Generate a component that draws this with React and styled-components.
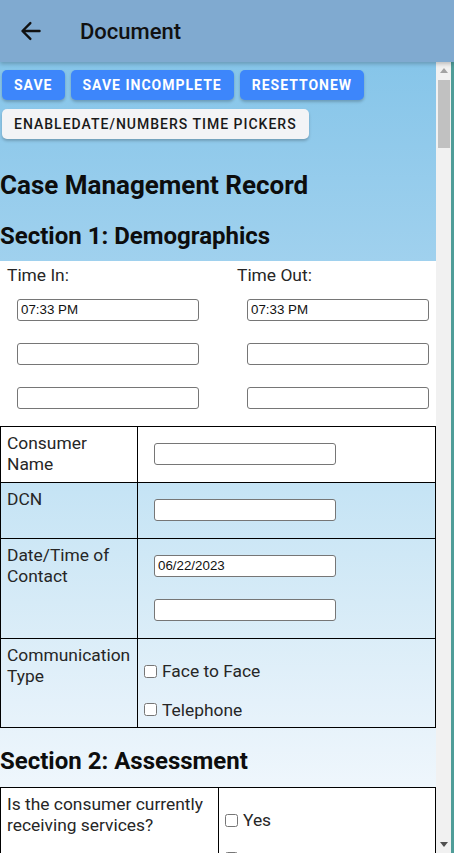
import React from "react";
import styled, { createGlobalStyle } from "styled-components";

const GlobalStyle = createGlobalStyle`
  html, body {
    margin: 0;
    padding: 0;
    height: 100%;
    overflow: hidden;
  }
  body {
    font-family: Roboto, "Noto Sans", Arial, sans-serif;
    color: #1c1c1c;
  }
  #root {
    height: 100%;
  }
`;

const Frame = styled.div`
  height: 100vh;
  display: flex;
  flex-direction: column;
`;

const AppBar = styled.header`
  flex: 0 0 62px;
  display: flex;
  align-items: center;
  background: #80aad0;
  box-shadow: 0 2px 4px rgba(0, 0, 0, 0.22);
  position: relative;
  z-index: 2;
`;

const BackButton = styled.button`
  width: 28px;
  height: 28px;
  margin-left: 17px;
  margin-right: 35px;
  padding: 0;
  border: none;
  background: transparent;
  display: flex;
  align-items: center;
  justify-content: center;
  cursor: pointer;
`;

const Title = styled.h1`
  margin: 0;
  font-size: 22px;
  font-weight: 500;
  color: #111;
`;

const Body = styled.div`
  flex: 1;
  min-height: 0;
  display: flex;
  border-right: 3px solid #4f9d99;
`;

const Scroller = styled.main`
  flex: 1;
  overflow-y: auto;
  scrollbar-width: none;
  &::-webkit-scrollbar {
    display: none;
  }
`;

/* scrollbar drawn beside the scrolling pane */
const ScrollRail = styled.div`
  flex: 0 0 15px;
  display: flex;
  flex-direction: column;
  background: #f1f1f1;
`;

const RailCap = styled.div`
  flex: 0 0 17px;
  display: flex;
  align-items: center;
  justify-content: center;
`;

const RailTrack = styled.div`
  flex: 1;
  padding: 1px 1px 0 2px;
`;

const RailThumb = styled.div`
  height: 68px;
  background: #c1c1c1;
`;

const Content = styled.div`
  padding-bottom: 400px;
  background: linear-gradient(
    to bottom,
    #86c5e9 0px,
    #a0d1ee 200px,
    #c6e4f5 430px,
    #d6ebf7 540px,
    #e4f1fa 640px,
    #eef6fc 720px,
    #ffffff 1100px
  );
`;

const Toolbar = styled.div`
  display: flex;
  flex-wrap: wrap;
  column-gap: 6px;
  row-gap: 9px;
  padding: 8px 0 0 2px;
`;

const ActionButton = styled.button`
  height: 30px;
  padding: 0 12px;
  border: none;
  border-radius: 5px;
  font-family: Roboto, Arial, sans-serif;
  font-size: 14px;
  font-weight: ${(p) => (p.$primary ? 700 : 500)};
  letter-spacing: 1px;
  text-transform: uppercase;
  color: ${(p) => (p.$primary ? "#ffffff" : "#1a1a1a")};
  background: ${(p) => (p.$primary ? "#3d86fb" : "#f3f4f6")};
  box-shadow: 0 2px 3px rgba(0, 0, 0, 0.22);
  cursor: pointer;
`;

const Heading = styled.h2`
  margin: ${(p) => p.$margin};
  font-size: ${(p) => p.$size}px;
  line-height: 1.2;
  font-weight: 700;
  color: #0d0d0d;
`;

const Banner = styled.div`
  padding-bottom: 10px;
`;

const TimeGrid = styled.div`
  display: grid;
  grid-template-columns: 230px 1fr;
  background: #ffffff;
  padding: 4px 0 6px;
`;

const Stack = styled.div`
  display: flex;
  flex-direction: column;
  padding-left: ${(p) => p.$indent || 0}px;
`;

const FieldLabel = styled.div`
  font-size: 17.4px;
  line-height: 21px;
  color: #262626;
  margin-bottom: 2px;
`;

const TextInput = styled.input`
  display: block;
  box-sizing: border-box;
  width: 182px;
  height: 22px;
  margin: 11px 10px;
  padding: 1px 3px;
  border: 1px solid #767676;
  border-radius: 3px;
  background: #fff;
  font-family: Arial, "Liberation Sans", sans-serif;
  font-size: 13.33px;
  color: #111;
`;

const Table = styled.table`
  width: 436px;
  table-layout: fixed;
  border-collapse: collapse;
  border: 1px solid #000;
`;

const Row = styled.tr`
  background: ${(p) => (p.$white ? "#ffffff" : "transparent")};
`;

const LabelCell = styled.td`
  width: ${(p) => p.$width}px;
  border: 1px solid #000;
  padding: 6px;
  vertical-align: top;
  font-size: 17.4px;
  line-height: 21px;
  color: #262626;
`;

const ValueCell = styled.td`
  border: 1px solid #000;
  padding: 5px 6px 6px;
  vertical-align: middle;
`;

const Option = styled.label`
  display: flex;
  align-items: center;
  height: 22px;
  margin-top: 16.5px;
  font-size: 17.4px;
  color: #262626;
`;

const Check = styled.input`
  width: 13px;
  height: 13px;
  margin: 0 5px 0 0;
`;

const ArrowBack = () => (
  <svg width="28" height="28" viewBox="0 0 512 512" aria-hidden="true">
    <path
      d="M244 400L100 256l144-144M120 256h292"
      fill="none"
      stroke="#111"
      strokeWidth="44"
      strokeLinecap="round"
      strokeLinejoin="round"
    />
  </svg>
);

const Triangle = ({ down, color }) => (
  <svg width="8" height="5" viewBox="0 0 8 5" aria-hidden="true">
    <path d={down ? "M0 0h8L4 5z" : "M0 5h8L4 0z"} fill={color} />
  </svg>
);

const CheckOption = ({ label }) => (
  <Option>
    <Check type="checkbox" />
    {label}
  </Option>
);

export default function App() {
  return (
    <>
      <GlobalStyle />
      <Frame>
        <AppBar>
          <BackButton aria-label="Back">
            <ArrowBack />
          </BackButton>
          <Title>Document</Title>
        </AppBar>
        <Body>
          <Scroller>
            <Content>
              <Banner>
                <Toolbar>
                  <ActionButton $primary>Save</ActionButton>
                  <ActionButton $primary>Save Incomplete</ActionButton>
                  <ActionButton $primary>ResetToNew</ActionButton>
                  <ActionButton>EnableDate/Numbers Time Pickers</ActionButton>
                </Toolbar>
                <Heading $size={26} $margin="31px 0 21px">
                  Case Management Record
                </Heading>
                <Heading $size={24} $margin="0">
                  Section 1: Demographics
                </Heading>
              </Banner>

              <TimeGrid>
                <Stack $indent={7}>
                  <FieldLabel>Time In:</FieldLabel>
                  <TextInput defaultValue="07:33 PM" />
                  <TextInput />
                  <TextInput />
                </Stack>
                <Stack $indent={7}>
                  <FieldLabel>Time Out:</FieldLabel>
                  <TextInput defaultValue="07:33 PM" />
                  <TextInput />
                  <TextInput />
                </Stack>
              </TimeGrid>

              <Table>
                <tbody>
                  <Row $white>
                    <LabelCell $width={124}>Consumer Name</LabelCell>
                    <ValueCell>
                      <Stack>
                        <TextInput />
                      </Stack>
                    </ValueCell>
                  </Row>
                  <Row>
                    <LabelCell $width={124}>DCN</LabelCell>
                    <ValueCell>
                      <Stack>
                        <TextInput />
                      </Stack>
                    </ValueCell>
                  </Row>
                  <Row>
                    <LabelCell $width={124}>Date/Time of Contact</LabelCell>
                    <ValueCell>
                      <Stack>
                        <TextInput defaultValue="06/22/2023" />
                        <TextInput />
                      </Stack>
                    </ValueCell>
                  </Row>
                  <Row>
                    <LabelCell $width={124}>Communication Type</LabelCell>
                    <ValueCell>
                      <CheckOption label="Face to Face" />
                      <CheckOption label="Telephone" />
                    </ValueCell>
                  </Row>
                </tbody>
              </Table>

              <Heading $size={24} $margin="19px 0 11px">
                Section 2: Assessment
              </Heading>

              <Table>
                <tbody>
                  <Row $white>
                    <LabelCell $width={205}>
                      Is the consumer currently receiving services?
                    </LabelCell>
                    <ValueCell>
                      <CheckOption label="Yes" />
                      <CheckOption label="No" />
                    </ValueCell>
                  </Row>
                  <Row>
                    <LabelCell $width={205}>
                      Has the consumer been hospitalized in the last 30 days?
                    </LabelCell>
                    <ValueCell>
                      <CheckOption label="Yes" />
                      <CheckOption label="No" />
                    </ValueCell>
                  </Row>
                </tbody>
              </Table>
            </Content>
          </Scroller>
          <ScrollRail aria-hidden="true">
            <RailCap>
              <Triangle color="#a3a3a3" />
            </RailCap>
            <RailTrack>
              <RailThumb />
            </RailTrack>
            <RailCap>
              <Triangle down color="#505050" />
            </RailCap>
          </ScrollRail>
        </Body>
      </Frame>
    </>
  );
}
